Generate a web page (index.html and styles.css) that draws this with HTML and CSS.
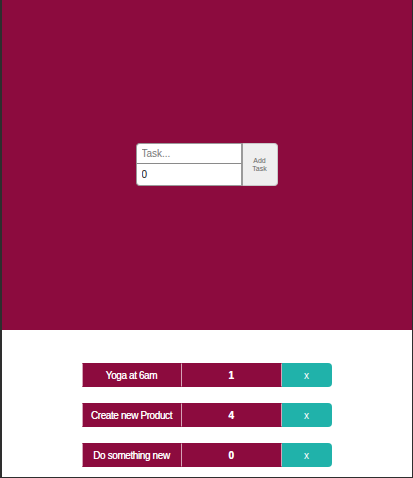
FILE: index.html
```html
<!DOCTYPE html>
<html>
<head>
<meta charset="utf-8">
<link rel="stylesheet" href="styles.css">
</head>
<body>
<div class="app">
  <header class="hero">
    <form class="task-form">
      <div class="fields">
        <input class="field field-top" type="text" placeholder="Task...">
        <input class="field field-bottom" type="text" value="0">
      </div>
      <button class="add-btn" type="button">Add<br>Task</button>
    </form>
  </header>
  <main class="list">
    <div class="row">
      <div class="cell">Yoga at 6am</div>
      <div class="cell">1</div>
      <button class="del" type="button">x</button>
    </div>
    <div class="row">
      <div class="cell">Create new Product</div>
      <div class="cell">4</div>
      <button class="del" type="button">x</button>
    </div>
    <div class="row">
      <div class="cell">Do something new</div>
      <div class="cell">0</div>
      <button class="del" type="button">x</button>
    </div>
  </main>
</div>
</body>
</html>
```

FILE: styles.css
```css
html, body {
  margin: 0;
  padding: 0;
  height: 100%;
}
body {
  background: #2e2e2e;
  font-family: "Liberation Sans", Arial, sans-serif;
}
.app {
  margin: 0 1px 0 2px;
  height: 477px;
  background: #ffffff;
  display: flex;
  flex-direction: column;
}
.hero {
  height: 330px;
  background: #8c0b3e;
  display: flex;
  align-items: center;
  justify-content: center;
}
.task-form {
  display: flex;
  margin-top: -1px;
  margin-right: 1px;
}
.fields {
  display: flex;
  flex-direction: column;
}
.field {
  box-sizing: border-box;
  width: 106px;
  height: 21px;
  margin: 0;
  padding: 0 5px;
  border: 1px solid #9a9a9a;
  background: #fff;
  font-family: "Liberation Sans", Arial, sans-serif;
  font-size: 10px;
  color: #111;
  outline: none;
}
.field::placeholder {
  color: #777;
}
.field-top {
  border-radius: 4px 0 0 0;
  border-bottom: 1px solid #8a8a8a;
}
.field-bottom {
  height: 22px;
  border-top: none;
  border-radius: 0 0 0 4px;
}
.add-btn {
  box-sizing: border-box;
  width: 36px;
  height: 43px;
  margin: 0;
  padding: 0;
  border: 1px solid #c8c8c8;
  border-left: 1px solid #9a9a9a;
  border-radius: 0 4px 4px 0;
  background: #efefef;
  color: #666;
  font-family: "Liberation Sans", Arial, sans-serif;
  font-size: 7px;
  line-height: 8px;
}
.list {
  display: flex;
  flex-direction: column;
  align-items: center;
  gap: 16px;
  padding-top: 33px;
}
.row {
  display: flex;
  height: 24px;
  margin-right: 1px;
}
.cell {
  box-sizing: border-box;
  width: 100px;
  height: 24px;
  background: #8c0b3e;
  color: #fff;
  font-size: 10px;
  letter-spacing: -0.4px;
  text-shadow: 0 0 0.4px #fff;
  display: flex;
  align-items: center;
  justify-content: center;
  border: 1px solid #d6a3b6;
  border-top-color: #8c0b3e;
  border-bottom-color: #8c0b3e;
}
.cell + .cell {
  border-left: none;
  font-weight: bold;
}
.del {
  width: 50px;
  height: 24px;
  margin: 0;
  padding: 0;
  border: none;
  background: #20b2aa;
  color: #fff;
  font-family: "Liberation Sans", Arial, sans-serif;
  font-size: 10px;
  border-radius: 0 4px 4px 0;
}
```
